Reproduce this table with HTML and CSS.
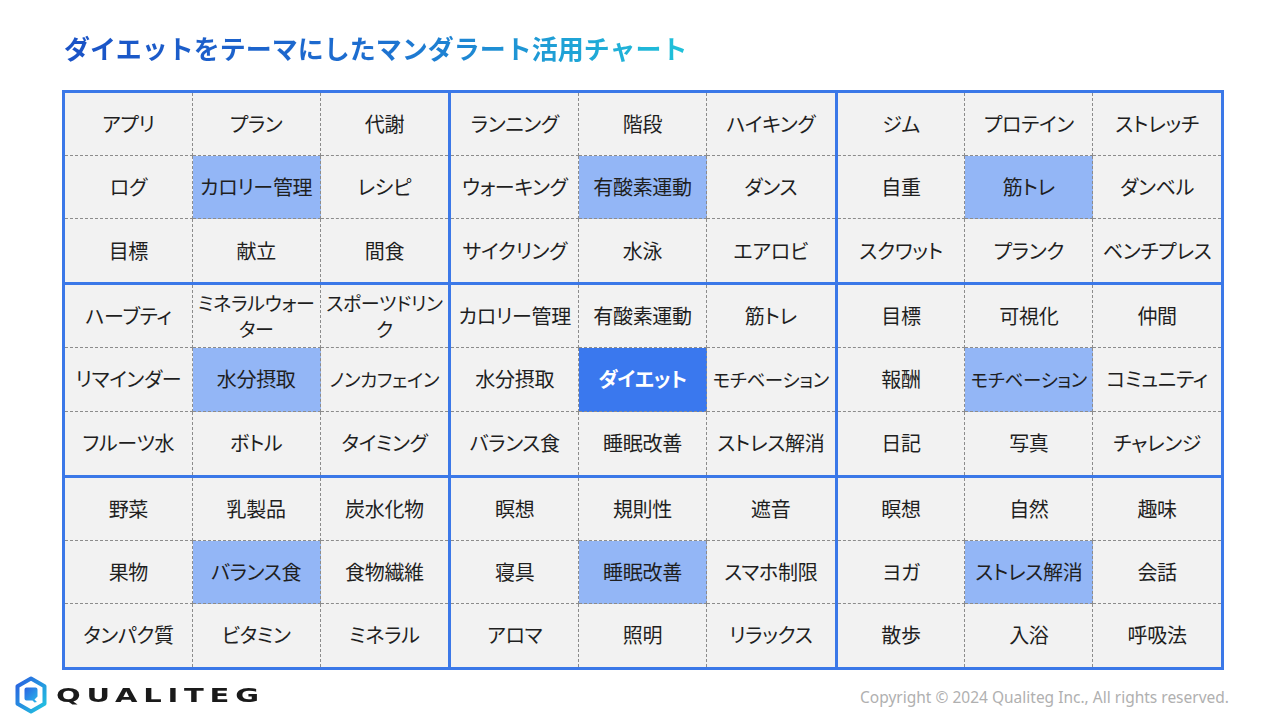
FILE: index.html
```html
<!DOCTYPE html>
<html lang="ja">
<head>
<meta charset="utf-8">
<title>マンダラート</title>
<link rel="stylesheet" href="styles.css">
</head>
<body>
<div class="page">
  <h1 class="title">ダイエットをテーマにしたマンダラート活用チャート</h1>
  <div class="chart">
    <div class="block">
      <div class="cell">アプリ</div><div class="cell">プラン</div><div class="cell">代謝</div>
      <div class="cell">ログ</div><div class="cell hl">カロリー管理</div><div class="cell">レシピ</div>
      <div class="cell">目標</div><div class="cell">献立</div><div class="cell">間食</div>
    </div>
    <div class="block">
      <div class="cell">ランニング</div><div class="cell">階段</div><div class="cell">ハイキング</div>
      <div class="cell">ウォーキング</div><div class="cell hl">有酸素運動</div><div class="cell">ダンス</div>
      <div class="cell">サイクリング</div><div class="cell">水泳</div><div class="cell">エアロビ</div>
    </div>
    <div class="block">
      <div class="cell">ジム</div><div class="cell">プロテイン</div><div class="cell">ストレッチ</div>
      <div class="cell">自重</div><div class="cell hl">筋トレ</div><div class="cell">ダンベル</div>
      <div class="cell">スクワット</div><div class="cell">プランク</div><div class="cell">ベンチプレス</div>
    </div>
    <div class="block">
      <div class="cell">ハーブティ</div><div class="cell two">ミネラルウォー<br>ター</div><div class="cell two">スポーツドリン<br>ク</div>
      <div class="cell">リマインダー</div><div class="cell hl">水分摂取</div><div class="cell long">ノンカフェイン</div>
      <div class="cell">フルーツ水</div><div class="cell">ボトル</div><div class="cell">タイミング</div>
    </div>
    <div class="block">
      <div class="cell">カロリー管理</div><div class="cell">有酸素運動</div><div class="cell">筋トレ</div>
      <div class="cell">水分摂取</div><div class="cell center">ダイエット</div><div class="cell long">モチベーション</div>
      <div class="cell">バランス食</div><div class="cell">睡眠改善</div><div class="cell">ストレス解消</div>
    </div>
    <div class="block">
      <div class="cell">目標</div><div class="cell">可視化</div><div class="cell">仲間</div>
      <div class="cell">報酬</div><div class="cell hl long">モチベーション</div><div class="cell">コミュニティ</div>
      <div class="cell">日記</div><div class="cell">写真</div><div class="cell">チャレンジ</div>
    </div>
    <div class="block">
      <div class="cell">野菜</div><div class="cell">乳製品</div><div class="cell">炭水化物</div>
      <div class="cell">果物</div><div class="cell hl">バランス食</div><div class="cell">食物繊維</div>
      <div class="cell">タンパク質</div><div class="cell">ビタミン</div><div class="cell">ミネラル</div>
    </div>
    <div class="block">
      <div class="cell">瞑想</div><div class="cell">規則性</div><div class="cell">遮音</div>
      <div class="cell">寝具</div><div class="cell hl">睡眠改善</div><div class="cell">スマホ制限</div>
      <div class="cell">アロマ</div><div class="cell">照明</div><div class="cell">リラックス</div>
    </div>
    <div class="block">
      <div class="cell">瞑想</div><div class="cell">自然</div><div class="cell">趣味</div>
      <div class="cell">ヨガ</div><div class="cell hl">ストレス解消</div><div class="cell">会話</div>
      <div class="cell">散歩</div><div class="cell">入浴</div><div class="cell">呼吸法</div>
    </div>
  </div>
  <div class="footer">
    <div class="logo">
      <svg class="logo-mark" width="34" height="38" viewBox="0 0 34 38">
        <defs>
          <linearGradient id="lg" x1="0" y1="0" x2="1" y2="1">
            <stop offset="0" stop-color="#2a5fe0"/>
            <stop offset="1" stop-color="#22c6e0"/>
          </linearGradient>
          <linearGradient id="lg2" x1="0" y1="0" x2="1" y2="1">
            <stop offset="0" stop-color="#2a62e2"/>
            <stop offset="1" stop-color="#2ab8ea"/>
          </linearGradient>
        </defs>
        <polygon points="17,2.5 30.5,10.2 30.5,27.8 17,35.5 3.5,27.8 3.5,10.2" fill="none" stroke="url(#lg)" stroke-width="4" stroke-linejoin="round"/>
        <path d="M12.5 11.5 H21.5 A2 2 0 0 1 23.5 13.5 V20.5 L20.5 23.5 L23 26 L20.5 26.5 L18.5 24.5 H12.5 A2 2 0 0 1 10.5 22.5 V13.5 A2 2 0 0 1 12.5 11.5 Z" fill="url(#lg2)"/>
      </svg>
      <span class="logo-text">QUALITEG</span>
    </div>
    <div class="copy">Copyright © 2024 Qualiteg Inc., All rights reserved.</div>
  </div>
</div>
</body>
</html>
```

FILE: styles.css
```css
html, body {
  margin: 0;
  padding: 0;
  background: #ffffff;
}

.page {
  width: 1280px;
  height: 720px;
  box-sizing: border-box;
  padding: 30px 0 0 62px;
  font-family: "Noto Sans CJK JP", "Noto Sans", sans-serif;
  position: relative;
}

.title {
  margin: 0 0 24px 2px;
  font-size: 26px;
  font-weight: 700;
  line-height: 36px;
  height: 36px;
  display: inline-block;
  background: linear-gradient(90deg, #1a52c6 0%, #1d6fd0 50%, #20c2da 100%);
  -webkit-background-clip: text;
  background-clip: text;
  color: transparent;
}

.chart {
  width: 1162px;
  height: 580px;
  box-sizing: border-box;
  padding: 3px;
  gap: 3px;
  background: #3b78e8;
  display: grid;
  grid-template-columns: repeat(3, 1fr);
  grid-template-rows: repeat(3, 1fr);
}

.block {
  display: grid;
  grid-template-columns: repeat(3, 1fr);
  grid-template-rows: repeat(3, 1fr);
  background: #f2f2f2;
}

.cell {
  display: flex;
  align-items: center;
  justify-content: center;
  text-align: center;
  font-size: 20px;
  line-height: 26px;
  letter-spacing: -0.3px;
  color: #1f1f1f;
  font-feature-settings: "palt";
  border-right: 1px dashed #8c8c8c;
  border-bottom: 1px dashed #8c8c8c;
  white-space: nowrap;
}

.cell:nth-child(3n) {
  border-right: none;
}

.cell:nth-child(n+7) {
  border-bottom: none;
}

.cell.two {
  font-size: 19px;
}

.cell.long {
  font-size: 18.5px;
}

.cell.hl {
  background: #93b6f6;
}

.cell.center {
  background: #3a78ee;
  color: #ffffff;
  font-weight: 700;
}

.footer {
  display: flex;
  justify-content: space-between;
  align-items: center;
  margin: 5px 51px 0 -48px;
  height: 40px;
}

.logo {
  display: flex;
  align-items: center;
  gap: 8px;
}

.logo-text {
  display: inline-block;
  font-family: "DejaVu Sans", sans-serif;
  font-weight: 700;
  font-size: 20px;
  letter-spacing: 4px;
  color: #1a1a1a;
  transform: scaleX(1.45);
  transform-origin: left center;
}

.copy {
  font-family: "Noto Sans", "Noto Sans CJK JP", sans-serif;
  font-size: 15.5px;
  color: #b0b0b0;
  padding-top: 3px;
}
```
